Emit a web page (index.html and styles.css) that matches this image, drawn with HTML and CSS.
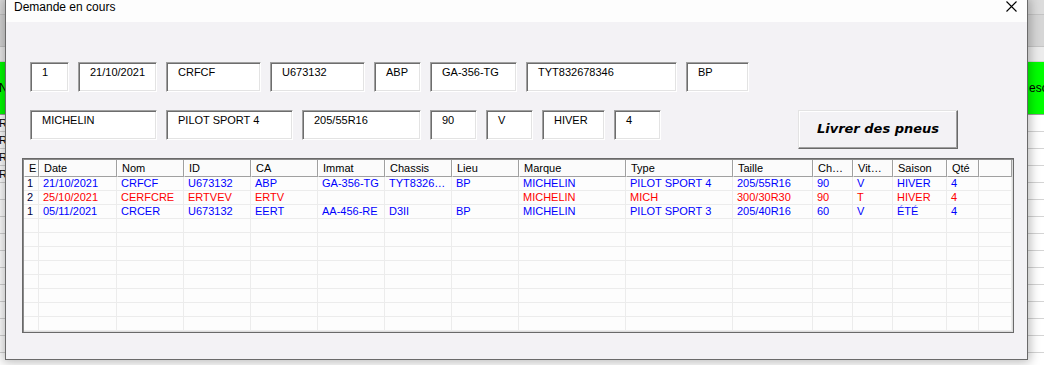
FILE: index.html
```html
<!DOCTYPE html>
<html lang="fr">
<head>
  <meta charset="UTF-8" />
  <title>Demande en cours</title>
  <link rel="stylesheet" href="styles.css">
</head>
<body>

  <!-- feuille Excel derriere le formulaire -->
  <div class="sheet">
    <div class="xrow x-top"></div>
    <div class="xrow x-head"></div>
    <div class="xrow x-sub"></div>
    <div class="xrow x-green"><span class="xl">NO</span><span class="xr">eso</span></div>
    <div class="xrow"><span class="xl">R</span></div>
    <div class="xrow"><span class="xl">R</span></div>
    <div class="xrow"><span class="xl">R</span></div>
    <div class="xrow"><span class="xl">RC</span></div>
    <div class="xrow"></div>
    <div class="xrow"></div>
    <div class="xrow"></div>
    <div class="xrow"></div>
    <div class="xrow"></div>
    <div class="xrow"></div>
    <div class="xrow"></div>
    <div class="xrow"></div>
    <div class="xrow"></div>
    <div class="xrow"></div>
  </div>

  <div class="dialog">
    <div class="titlebar">
      <span>Demande en cours</span>
      <svg class="close" width="11" height="11" viewBox="0 0 11 11">
        <path d="M0.5 0.5 L10.5 10.5 M10.5 0.5 L0.5 10.5" stroke="#000" stroke-width="1.1" fill="none"/>
      </svg>
    </div>

    <div class="dlg-body">
      <div class="fields">
        <div class="field w39">1</div>
        <div class="field w79">21/10/2021</div>
        <div class="field w95">CRFCF</div>
        <div class="field w95">U673132</div>
        <div class="field w47">ABP</div>
        <div class="field w87">GA-356-TG</div>
        <div class="field w151">TYT832678346</div>
        <div class="field w63">BP</div>
      </div>

      <div class="fields second">
        <div class="field w127">MICHELIN</div>
        <div class="field w127">PILOT SPORT 4</div>
        <div class="field w119">205/55R16</div>
        <div class="field w47">90</div>
        <div class="field w47">V</div>
        <div class="field w63">HIVER</div>
        <div class="field w47">4</div>
        <button class="btn-livrer">Livrer des pneus</button>
      </div>

      <div class="listbox">
        <table>
          <colgroup>
            <col style="width:15px"><col style="width:78px"><col style="width:67px">
            <col style="width:67px"><col style="width:67px"><col style="width:67px">
            <col style="width:67px"><col style="width:67px"><col style="width:107px">
            <col style="width:107px"><col style="width:80px"><col style="width:40px">
            <col style="width:40px"><col style="width:54px"><col style="width:32px">
            <col>
          </colgroup>
          <thead>
            <tr>
              <th>E</th><th>Date</th><th>Nom</th><th>ID</th><th>CA</th><th>Immat</th>
              <th>Chassis</th><th>Lieu</th><th>Marque</th><th>Type</th><th>Taille</th>
              <th>Ch…</th><th>Vit…</th><th>Saison</th><th>Qté</th><th></th>
            </tr>
          </thead>
          <tbody>
            <tr class="blue">
              <td class="num">1</td><td>21/10/2021</td><td>CRFCF</td><td>U673132</td><td>ABP</td>
              <td>GA-356-TG</td><td>TYT8326…</td><td>BP</td><td>MICHELIN</td><td>PILOT SPORT 4</td>
              <td>205/55R16</td><td>90</td><td>V</td><td>HIVER</td><td>4</td><td></td>
            </tr>
            <tr class="red">
              <td class="num">2</td><td>25/10/2021</td><td>CERFCRE</td><td>ERTVEV</td><td>ERTV</td>
              <td></td><td></td><td></td><td>MICHELIN</td><td>MICH</td>
              <td>300/30R30</td><td>90</td><td>T</td><td>HIVER</td><td>4</td><td></td>
            </tr>
            <tr class="blue">
              <td class="num">1</td><td>05/11/2021</td><td>CRCER</td><td>U673132</td><td>EERT</td>
              <td>AA-456-RE</td><td>D3II</td><td>BP</td><td>MICHELIN</td><td>PILOT SPORT 3</td>
              <td>205/40R16</td><td>60</td><td>V</td><td>ÉTÉ</td><td>4</td><td></td>
            </tr>
            <tr class="empty"><td></td><td></td><td></td><td></td><td></td><td></td><td></td><td></td><td></td><td></td><td></td><td></td><td></td><td></td><td></td><td></td></tr>
            <tr class="empty"><td></td><td></td><td></td><td></td><td></td><td></td><td></td><td></td><td></td><td></td><td></td><td></td><td></td><td></td><td></td><td></td></tr>
            <tr class="empty"><td></td><td></td><td></td><td></td><td></td><td></td><td></td><td></td><td></td><td></td><td></td><td></td><td></td><td></td><td></td><td></td></tr>
            <tr class="empty"><td></td><td></td><td></td><td></td><td></td><td></td><td></td><td></td><td></td><td></td><td></td><td></td><td></td><td></td><td></td><td></td></tr>
            <tr class="empty"><td></td><td></td><td></td><td></td><td></td><td></td><td></td><td></td><td></td><td></td><td></td><td></td><td></td><td></td><td></td><td></td></tr>
            <tr class="empty"><td></td><td></td><td></td><td></td><td></td><td></td><td></td><td></td><td></td><td></td><td></td><td></td><td></td><td></td><td></td><td></td></tr>
            <tr class="empty"><td></td><td></td><td></td><td></td><td></td><td></td><td></td><td></td><td></td><td></td><td></td><td></td><td></td><td></td><td></td><td></td></tr>
            <tr class="empty"><td></td><td></td><td></td><td></td><td></td><td></td><td></td><td></td><td></td><td></td><td></td><td></td><td></td><td></td><td></td><td></td></tr>
          </tbody>
        </table>
      </div>
    </div>
  </div>

</body>
</html>
```

FILE: styles.css
```css
/* ---------------- GENERAL ---------------- */
body, html {
  margin: 0;
  width: 1044px;
  height: 365px;
  overflow: hidden;
  font-family: 'Liberation Sans', Arial, sans-serif;
  background: #ffffff;
}

body {
  position: relative;
}

/* ---------------- EXCEL SHEET (background) ---------------- */
.sheet {
  width: 1044px;
}

.xrow {
  height: 16px;
  border-bottom: 1px solid #d4d4d4;
  background: #ffffff;
  font-family: 'Liberation Sans', Arial, sans-serif;
  font-size: 11px;
  line-height: 16px;
  position: relative;
  overflow: hidden;
}

.x-top {
  height: 14px;
  background: #dcdcdc;
  border-bottom-color: #c4c4c4;
}

.x-head {
  height: 31px;
  background: #d6d6d6;
  border-bottom-color: #c4c4c4;
}

.x-sub {
  height: 14px;
  background: #ececec;
}

.x-green {
  height: 52px;
  line-height: 52px;
  background: #00ff00;
  border-bottom-color: #9c9c9c;
  font-size: 12px;
}

.xl {
  margin-left: -1px;
}

/* text of the cell right of the form */
.xr {
  position: absolute;
  left: 1029px;
  top: 0;
}

/* ---------------- DIALOG ---------------- */
.dialog {
  position: absolute;
  left: 5px;
  top: 0;
  width: 1021px;
  height: 359px;
  border: 1px solid #6a6a6a;
  border-top: none;
  background: #f3f2f5;
  box-shadow: 0 0 10px 2px rgba(0, 0, 0, 0.28);
  display: flex;
  flex-direction: column;
}

.titlebar {
  height: 22px;
  box-sizing: border-box;
  background: #fdfdfd;
  display: flex;
  justify-content: space-between;
  align-items: flex-start;
  padding: 1px 10px 0 8px;
  font-size: 12px;
  line-height: 13px;
  color: #000;
}

.dlg-body {
  padding: 40px 0 0 16px;
}

/* ---------------- TEXT FIELDS ---------------- */
.fields {
  display: flex;
  align-items: flex-start;
  gap: 9px;
  margin-left: 8px;
}

.fields.second {
  margin-top: 18px;
}

.field {
  height: 30px;
  box-sizing: border-box;
  background: #ffffff;
  border: 1px solid;
  border-color: #a0a0a0 #ffffff #ffffff #a0a0a0;
  box-shadow: inset 1px 1px 0 #6d6d6d, inset -1px -1px 0 #e3e3e3;
  padding: 3px 10px 0 11px;
  font-size: 11px;
  line-height: 13px;
  color: #000;
  white-space: nowrap;
  overflow: hidden;
}

.w39 { width: 39px; }
.w47 { width: 47px; }
.w63 { width: 63px; }
.w79 { width: 79px; }
.w87 { width: 87px; }
.w95 { width: 95px; }
.w119 { width: 119px; }
.w127 { width: 127px; }
.w151 { width: 151px; }

.btn-livrer {
  margin-left: 128px;
  width: 160px;
  height: 39px;
  background: #f3f2f5;
  border: 1px solid;
  border-color: #e3e3e3 #696969 #696969 #e3e3e3;
  box-shadow: inset -1px -1px 0 #a0a0a0, inset 1px 1px 0 #ffffff;
  font-family: 'DejaVu Sans', Verdana, sans-serif;
  font-weight: bold;
  font-style: italic;
  font-size: 13px;
  color: #000;
  padding: 0 0 2px 0;
}

/* ---------------- LISTBOX ---------------- */
.listbox {
  margin-top: 9px;
  width: 992px;
  height: 175px;
  box-sizing: border-box;
  border: 1px solid #696969;
  box-shadow: inset 1px 1px 0 #8a8a8a, inset -1px -1px 0 #dcdcdc;
  padding: 1px;
  background: #fdfdfd;
  overflow: hidden;
}

.listbox table {
  width: 988px;
  table-layout: fixed;
  border-collapse: separate;
  border-spacing: 0;
  font-size: 11px;
}

.listbox th {
  height: 17px;
  box-sizing: border-box;
  padding: 0 0 0 4px;
  text-align: left;
  font-weight: normal;
  color: #000;
  background: #fbfbfb;
  border-left: 1px solid #ffffff;
  border-right: 1px solid #a0a0a0;
  border-bottom: 1px solid #a0a0a0;
  line-height: 15px;
  white-space: nowrap;
  overflow: hidden;
}

.listbox td {
  height: 14px;
  box-sizing: border-box;
  padding: 0 0 0 4px;
  border-right: 1px solid #ececec;
  border-bottom: 1px solid #ececec;
  line-height: 13px;
  white-space: nowrap;
  overflow: hidden;
}

.listbox td:first-child {
  padding-left: 3px;
}

.blue td { color: #0000ff; }
.red td { color: #ff0000; }
.blue td.num, .red td.num { color: #000040; }
```
